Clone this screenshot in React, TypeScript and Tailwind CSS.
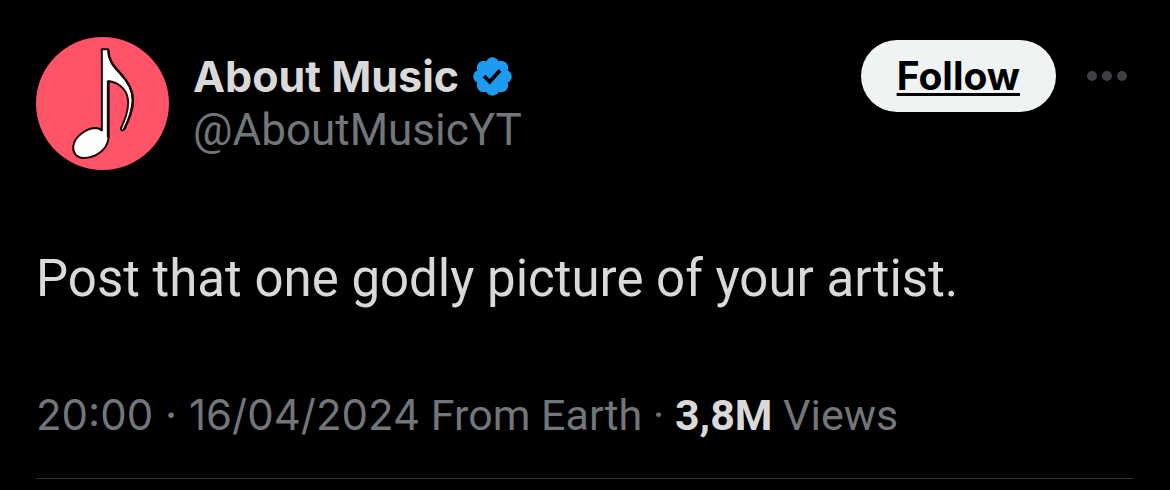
function Avatar() {
  return (
    <svg viewBox="30 32 400 400" className="size-[133px] shrink-0" role="img" aria-label="About Music">
      <circle cx="230" cy="232" r="200" fill="#ff5468" />
      <path
        d="M228 69H247C247 98 258 115 280 138C306 165 322 190 322 222C322 254 309 281 294 311Q287 316 285 308C299 276 307 256 307 228C307 196 284 169 248 164V337C244 370 212 396 172 396C151 395 140 380 142 360C147 329 183 306 211 306Q221 307 228 313Z"
        fill="#fff"
        stroke="#1c0508"
        strokeWidth="6"
        strokeLinejoin="round"
      />
      <path d="M247 164V334" stroke="#1c0508" strokeWidth="8" fill="none" />
      <path d="M248 72C248 98 259 115 281 138C307 165 322 190 321 222C320 254 309 281 296 309" stroke="#1c0508" strokeWidth="7" fill="none" />
    </svg>
  );
}

function VerifiedBadge() {
  return (
    <svg viewBox="1.5 1.5 19 19" className="size-[39px] shrink-0" role="img" aria-label="Verified account">
      <path
        fill="#1d9bf0"
        d="M20.396 11c-.018-.646-.215-1.275-.57-1.816-.354-.54-.852-.972-1.438-1.246.223-.607.27-1.264.14-1.897-.131-.634-.437-1.218-.882-1.687-.47-.445-1.053-.75-1.687-.882-.633-.13-1.29-.083-1.897.14-.273-.587-.704-1.086-1.245-1.44S11.647 1.62 11 1.604c-.646.017-1.273.213-1.813.568s-.969.854-1.24 1.44c-.608-.223-1.267-.272-1.902-.14-.635.13-1.22.436-1.69.882-.445.47-.749 1.055-.878 1.688-.13.633-.08 1.29.144 1.896-.587.274-1.087.705-1.443 1.245-.356.54-.555 1.17-.574 1.817.02.647.218 1.276.574 1.817.356.54.856.972 1.443 1.245-.224.606-.274 1.263-.144 1.896.13.634.433 1.218.877 1.688.47.443 1.054.747 1.687.878.633.132 1.29.084 1.897-.136.274.586.705 1.084 1.246 1.439.54.354 1.17.551 1.816.569.647-.016 1.276-.213 1.817-.567s.972-.854 1.245-1.44c.604.239 1.266.296 1.903.164.636-.132 1.22-.447 1.68-.907.46-.46.776-1.044.908-1.681s.075-1.299-.165-1.903c.586-.274 1.084-.705 1.439-1.246.354-.54.551-1.17.569-1.816zM9.662 14.85l-3.429-3.428 1.293-1.302 2.072 2.072 4.4-4.794 1.347 1.246z"
      />
    </svg>
  );
}

export default function App() {
  return (
    <main className="min-h-screen bg-black px-9 pt-[37px] font-['Roboto',sans-serif] text-[#d9d9d9]">
      <article className="border-b border-[#2f3336] pb-9">
        <header className="flex items-start justify-between">
          <div className="flex gap-6">
            <Avatar />
            <div className="pt-3">
              <h1 className="flex items-center gap-3.5 font-['Inter',sans-serif] text-[43px]/[54px] font-bold">
                About Music
                <VerifiedBadge />
              </h1>
              <p className="text-[44px]/[54px] text-[#71767b]">@AboutMusicYT</p>
            </div>
          </div>
          <div className="flex items-center gap-[30px] pt-[3px]">
            <button
              type="button"
              className="h-[72px] rounded-full bg-[#eff3f4] px-9 font-['Inter',sans-serif] text-[39px] font-bold text-black underline decoration-3 underline-offset-3"
            >
              Follow
            </button>
            <button type="button" aria-label="More" className="pr-1.5">
              <svg viewBox="0 0 42 12" className="h-3 w-[42px]" fill="#3e4144">
                <circle cx="6" cy="6" r="5" />
                <circle cx="21" cy="6" r="5" />
                <circle cx="36" cy="6" r="5" />
              </svg>
            </button>
          </div>
        </header>
        <p className="pt-[73px] text-[51px]/[72px]">Post that one godly picture of your artist.</p>
        <p className="pt-[73px] text-[43px]/[54px] text-[#71767b]">
          <time dateTime="2024-04-16T20:00" className="font-['Inter',sans-serif] text-[42px]">20:00 · 16/04/2024</time> From Earth ·{" "}
          <strong className="text-[#d9d9d9]">3,8M</strong> Views
        </p>
      </article>
    </main>
  );
}
